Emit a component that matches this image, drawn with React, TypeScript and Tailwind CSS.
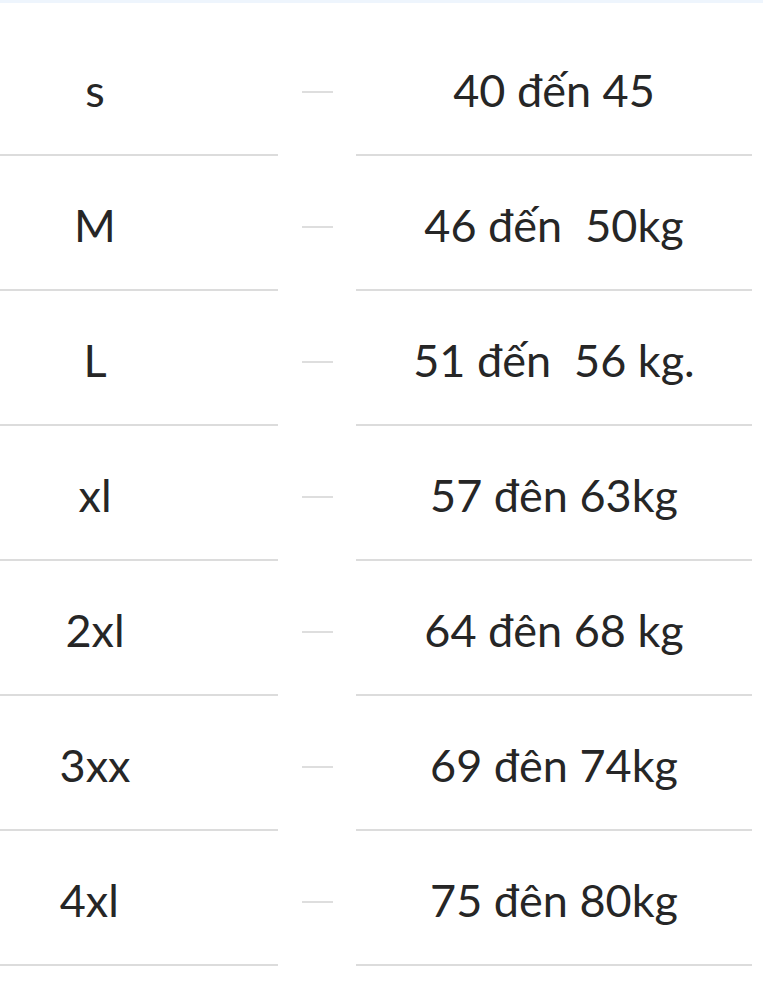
import React from 'react';

const rows: { size: string; weight: string }[] = [
  { size: 's', weight: '40 đến 45' },
  { size: 'M', weight: '46 đến  50kg' },
  { size: 'L', weight: '51 đến  56 kg.' },
  { size: 'xl', weight: '57 đên 63kg' },
  { size: '2xl', weight: '64 đên 68 kg' },
  { size: '3xx', weight: '69 đên 74kg' },
  { size: '4xl\u00a0', weight: '75 đên 80kg' },
];

export default function App() {
  return (
    <div className="min-h-screen bg-white text-[#262626] font-['Lato','Noto_Sans',sans-serif]">
      <div className="h-[3px] bg-[#eef5fd]" />
      <div className="pt-[18px] pr-[11px]">
        {rows.map((row) => (
          <div key={row.size} className="grid grid-cols-[278px_78px_1fr]">
            {/* size */}
            <div className="h-[135px] border-b-2 border-[#dcdcdc] pt-[6px] flex items-center">
              <span className="w-[190px] text-center text-[45px] leading-none whitespace-pre">{row.size}</span>
            </div>
            {/* separator */}
            <div className="h-[135px] pt-[6px] flex items-center justify-center">
              <div className="w-[31px] h-[2px] bg-[#dedede]" />
            </div>
            {/* weight */}
            <div className="h-[135px] border-b-2 border-[#dcdcdc] pt-[6px] flex items-center justify-center">
              <span className="text-[45px] leading-none whitespace-pre">{row.weight}</span>
            </div>
          </div>
        ))}
      </div>
    </div>
  );
}
